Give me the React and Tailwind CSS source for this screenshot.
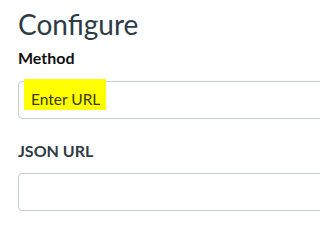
export default function App() {
  return (
    <div className="min-h-[226px] w-full overflow-hidden bg-white pl-[18px] pt-[7px] font-['Lato','Liberation_Sans',sans-serif] text-[#2d3b45]">
      <h1 className="text-[28px] leading-[34px] font-normal">Configure</h1>

      <label className="mt-[7px] block text-[16px] leading-[19px] font-bold text-[#111]">Method</label>
      <div className="relative mt-[14px] flex h-[38px] w-[600px] items-center rounded-[4px] border border-[#c7cdd1] pl-[12px]">
        <span className="absolute top-[-3px] left-[5px] h-[31px] w-[82px] bg-[#ffff00]" />
        <span className="relative text-[15.5px] text-[#3a3a0c]">Enter URL</span>
      </div>

      <label className="mt-[22px] block text-[16px] leading-[19px] font-bold">JSON URL</label>
      <div className="mt-[13px] h-[38px] w-[600px] rounded-[4px] border border-[#c7cdd1]" />
    </div>
  );
}
